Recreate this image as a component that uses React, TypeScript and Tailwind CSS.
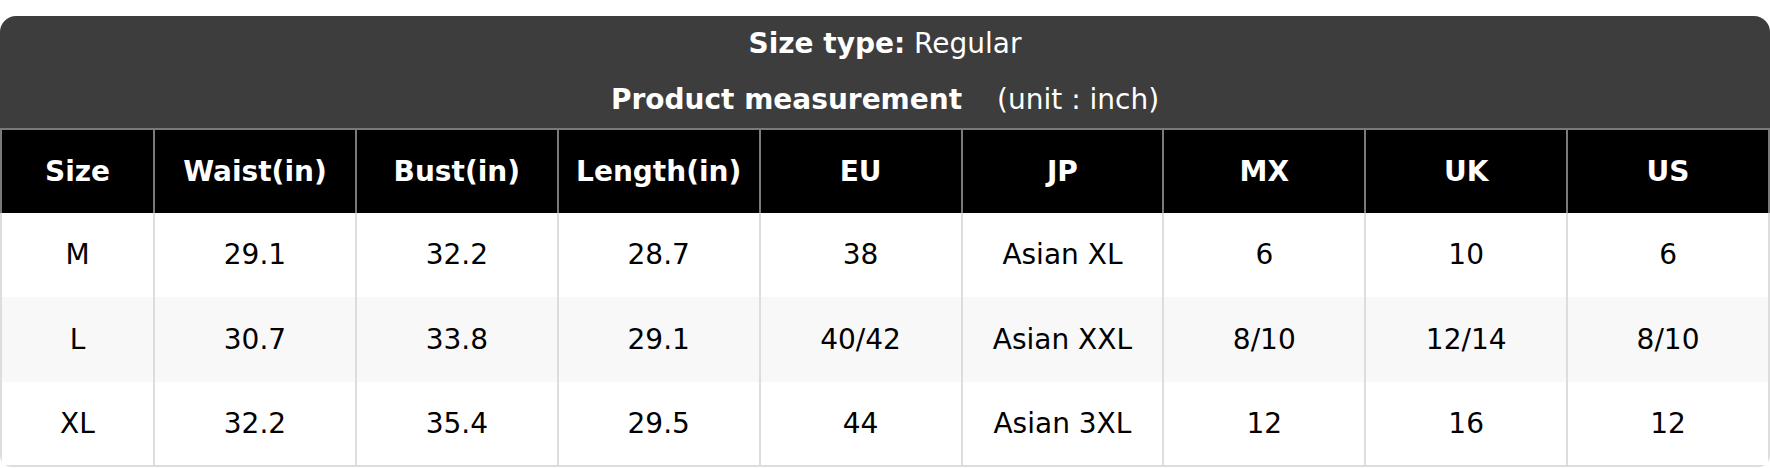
const columns = ["Size", "Waist(in)", "Bust(in)", "Length(in)", "EU", "JP", "MX", "UK", "US"];

const rows = [
  ["M", "29.1", "32.2", "28.7", "38", "Asian XL", "6", "10", "6"],
  ["L", "30.7", "33.8", "29.1", "40/42", "Asian XXL", "8/10", "12/14", "8/10"],
  ["XL", "32.2", "35.4", "29.5", "44", "Asian 3XL", "12", "16", "12"],
];

export default function App() {
  return (
    <div className="w-full bg-white pt-[16px] font-['DejaVu_Sans',sans-serif] text-[28px]">
      <div className="w-full rounded-t-[16px] rounded-b-[12px] overflow-hidden">
        {/* Title block */}
        <div className="bg-[#3d3d3d] text-white text-center p-[8px]">
          <div className="h-[40px] leading-[40px]">
            <span className="font-bold">Size type:</span> Regular
          </div>
          <div className="h-[40px] leading-[40px] mt-[16px]">
            <span className="font-bold">Product measurement</span>
            <span className="ml-[35px]">(unit : inch)</span>
          </div>
        </div>

        {/* Table */}
        <div className="grid grid-cols-[155px_repeat(8,1fr)]">
          {columns.map((c, i) => (
            <div
              key={c}
              className={`h-[85px] flex items-center justify-center bg-black text-white font-bold border-t-2 border-r-2 border-[#7a7a7a] ${
                i === 0 ? "border-l-2" : ""
              }`}
            >
              {c}
            </div>
          ))}
          {rows.map((r, ri) =>
            r.map((v, ci) => (
              <div
                key={`${ri}-${ci}`}
                className={`flex items-center justify-center text-black border-r-2 border-[#dddddd] ${
                  ci === 0 ? "border-l-2" : ""
                } ${ri === 1 ? "bg-[#f8f8f8] h-[85px]" : "bg-white h-[84px]"} ${
                  ri === rows.length - 1 ? "border-b-2 h-[85px]" : ""
                }`}
              >
                {v}
              </div>
            ))
          )}
        </div>
      </div>
    </div>
  );
}
